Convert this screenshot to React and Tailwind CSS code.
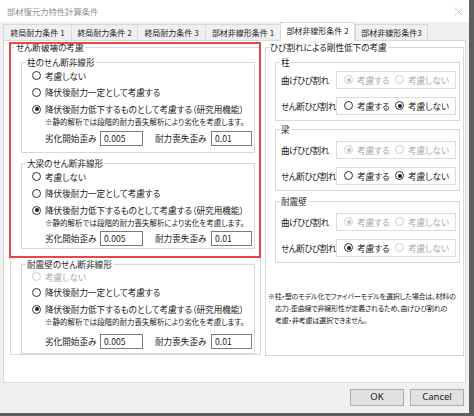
import React from "react";

const FONT = "[font-family:'Noto_Sans_CJK_JP','Noto_Sans_CJK_SC',sans-serif] [font-feature-settings:'palt']";

function Radio({ checked, disabled, label, gap = "ml-[4px]" }) {
  return (
    <div className="flex items-center">
      <span
        className={
          "w-[9px] h-[9px] rounded-full border bg-white flex items-center justify-center shrink-0 " +
          (disabled ? "border-[#cdcdcd]" : "border-[#333333]")
        }
      >
        {checked && (
          <span className={"w-[4px] h-[4px] rounded-full " + (disabled ? "bg-[#c2c2c2]" : "bg-[#1e1e1e]")} />
        )}
      </span>
      <span className={gap + " whitespace-nowrap " + (disabled ? "text-[#a9a9a9]" : "text-[#1b1b1b]")}>{label}</span>
    </div>
  );
}

function Field({ value, w }) {
  return (
    <div className={"h-[15px] border border-[#7a7a7a] bg-white pl-[3px] leading-[13px] text-[8.6px] text-[#1b1b1b] " + w}>
      {value}
    </div>
  );
}

function LeftGroup({ title, cls, r1, r2, r3, inp, pb, firstDisabled }) {
  return (
    <fieldset className={"border border-[#d8d8d8] ml-[10px] mr-[5px] " + cls}>
      <legend className="ml-[4px] px-[1px] leading-[11px] text-[8.6px] text-[#1b1b1b]">{title}</legend>
      <div className={"flex flex-col text-[8.6px] " + pb}>
        <div className={"flex items-center pl-[10px] " + r1}>
          <Radio label="考慮しない" disabled={firstDisabled} />
        </div>
        <div className={"flex items-center pl-[10px] " + r2}>
          <Radio label="降伏後耐力一定として考慮する" />
        </div>
        <div className={"flex items-center pl-[10px] " + r3}>
          <Radio label="降伏後耐力低下するものとして考慮する（研究用機能）" checked />
        </div>
        <div className="h-[8px] leading-[8px] pl-[23px] text-[7.5px] text-[#1b1b1b] whitespace-nowrap">
          ※静的解析では段階的耐力喪失解析により劣化を考慮します。
        </div>
        <div className={"flex items-center pl-[23px] " + inp}>
          <div className="w-[55px] leading-[15px] text-[#1b1b1b] whitespace-nowrap">劣化開始歪み</div>
          <Field value="0.005" w="w-[43px]" />
          <div className="ml-[12px] w-[56px] leading-[15px] text-[#1b1b1b] whitespace-nowrap">耐力喪失歪み</div>
          <Field value="0.01" w="w-[41px]" />
        </div>
      </div>
    </fieldset>
  );
}

function BoxRadios({ a, b }) {
  return (
    <div className="flex items-center h-[18px] w-[120px] border border-[#dcdcdc] bg-white pl-[7px]">
      <div className="w-[51px]">
        <Radio label="考慮する" checked={a.checked} disabled={a.disabled} gap="ml-[4px]" />
      </div>
      <Radio label="考慮しない" checked={b.checked} disabled={b.disabled} gap="ml-[4px]" />
    </div>
  );
}

function RightRow({ label, a, b }) {
  return (
    <div className="flex items-center h-[18px]">
      <div className="w-[60px] pl-[5px] text-[8.6px] tracking-[-0.5px] text-[#1b1b1b] whitespace-nowrap">{label}</div>
      <BoxRadios a={a} b={b} />
    </div>
  );
}

function RightGroup({ title, cls, pt, rows }) {
  return (
    <fieldset className={"border border-[#d8d8d8] ml-[9px] mr-[3px] " + cls}>
      <legend className="ml-[4px] px-[1px] leading-[11px] text-[8.6px] text-[#1b1b1b]">{title}</legend>
      <div className={"flex flex-col gap-[8px] pb-[5px] text-[8.6px] " + pt}>
        {rows.map((r, i) => (
          <RightRow key={i} label={r.label} a={r.a} b={r.b} />
        ))}
      </div>
    </fieldset>
  );
}

const tabs = [
  { t: "終局耐力条件 1", w: "w-[68px]" },
  { t: "終局耐力条件 2", w: "w-[66px]" },
  { t: "終局耐力条件 3", w: "w-[68px]" },
  { t: "部材非線形条件 1", w: "w-[75px]" },
  { t: "部材非線形条件 2", w: "w-[75px]", sel: true },
  { t: "部材非線形条件3", w: "w-[73px]" },
];

export default function App() {
  const dis = { checked: false, disabled: true };
  const disOn = { checked: true, disabled: true };
  const on = { checked: true, disabled: false };
  const off = { checked: false, disabled: false };
  return (
    <div className={"relative w-[474px] h-[416px] bg-[#5e5e5e] overflow-hidden " + FONT}>
      <div className="w-[469px] h-[413px] bg-[#f0f0f0] flex flex-col">
        {/* title bar */}
        <div className="h-[22px] bg-white flex items-center justify-between pl-[7px] pr-[6px] shrink-0">
          <span className="text-[8.3px] text-[#8f8f8f] whitespace-nowrap">部材復元力特性計算条件</span>
          <svg width="9" height="9" viewBox="0 0 9 9">
            <path d="M0.5 0.5 L8.5 8.5 M8.5 0.5 L0.5 8.5" stroke="#c4c4c4" strokeWidth="0.9" fill="none" />
          </svg>
        </div>
        {/* tabs */}
        <div className="h-[18px] flex items-end ml-[3px] shrink-0">
          {tabs.map((t) =>
            t.sel ? (
              <div
                key={t.t}
                className={
                  "relative z-10 h-[19px] -mb-[1px] bg-white border-x border-t border-[#d9d9d9] flex items-start justify-center pt-[2px] leading-[12px] text-[8px] text-[#1b1b1b] whitespace-nowrap " +
                  t.w
                }
              >
                {t.t}
              </div>
            ) : (
              <div
                key={t.t}
                className={
                  "h-[16px] bg-[#f0f0f0] border-l border-t border-[#d9d9d9] last:border-r flex items-center justify-center leading-[12px] text-[8px] text-[#1b1b1b] whitespace-nowrap " +
                  t.w
                }
              >
                {t.t}
              </div>
            )
          )}
        </div>
        {/* panel */}
        <div className="ml-[3px] w-[463px] h-[343px] bg-white border border-[#d9d9d9] flex items-stretch pl-[6px] pt-[1px] shrink-0">
          <fieldset className="w-[251px] self-start border border-[#d8d8d8]">
            <legend className="ml-[4px] px-[1px] leading-[11px] text-[8.6px] text-[#1b1b1b]">せん断破壊の考慮</legend>
            <div className="flex flex-col">
              <LeftGroup
                title="柱のせん断非線形"
                cls="mt-[4px]"
                r1="h-[16px]"
                r2="h-[17px]"
                r3="h-[17px]"
                inp="mt-[5px]"
                pb="pb-[6px]"
              />
              <LeftGroup
                title="大梁のせん断非線形"
                cls="mt-[5px]"
                r1="h-[16px]"
                r2="h-[17px]"
                r3="h-[17px]"
                inp="mt-[4px]"
                pb="pb-[2px]"
              />
              <LeftGroup
                title="耐震壁のせん断非線形"
                cls="mt-[10px]"
                r1="h-[14px]"
                r2="h-[17px]"
                r3="h-[17px]"
                inp="mt-[8px]"
                pb="pb-[4px]"
                firstDisabled
              />
            </div>
          </fieldset>
          <fieldset className="ml-[4px] w-[199px] h-[314px] border border-[#d8d8d8]">
            <legend className="ml-[3px] px-[1px] leading-[11px] text-[8.6px] text-[#1b1b1b]">ひび割れによる剛性低下の考慮</legend>
            <div className="flex flex-col">
              <RightGroup
                title="柱"
                cls="mt-[4px]"
                pt="pt-[3px]"
                rows={[
                  { label: "曲げひび割れ", a: disOn, b: dis },
                  { label: "せん断ひび割れ", a: off, b: on },
                ]}
              />
              <RightGroup
                title="梁"
                cls="mt-[3px]"
                pt="pt-[6px]"
                rows={[
                  { label: "曲げひび割れ", a: disOn, b: dis },
                  { label: "せん断ひび割れ", a: off, b: on },
                ]}
              />
              <RightGroup
                title="耐震壁"
                cls="mt-[5px]"
                pt="pt-[6px]"
                rows={[
                  { label: "曲げひび割れ", a: disOn, b: dis },
                  { label: "せん断ひび割れ", a: on, b: dis },
                ]}
              />
              <div className="mt-[27px] flex flex-col text-[7px] tracking-[-0.2px] leading-[12px] text-[#1b1b1b] whitespace-nowrap">
                <div className="pl-[2px]">※柱・壁のモデル化でファイバーモデルを選択した場合は、材料の</div>
                <div className="pl-[9px]">応力-歪曲線で非線形性が定義されるため、曲げひび割れの</div>
                <div className="pl-[9px]">考慮・非考慮は選択できません。</div>
              </div>
            </div>
          </fieldset>
        </div>
        {/* buttons */}
        <div className="flex justify-end gap-[6px] pr-[5px] mt-[6px]">
          <div className="w-[54px] h-[17px] border border-[#adadad] bg-[#e1e1e1] flex items-center justify-center text-[9.5px] text-[#1b1b1b] [font-family:'Noto_Sans',sans-serif]">
            OK
          </div>
          <div className="w-[54px] h-[17px] border border-[#adadad] bg-[#e1e1e1] flex items-center justify-center text-[9.5px] text-[#1b1b1b] [font-family:'Noto_Sans',sans-serif]">
            Cancel
          </div>
        </div>
      </div>
      {/* red annotation box */}
      <div className="absolute left-[9px] top-[42px] w-[252px] h-[216px] border-2 border-[#e5484a] pointer-events-none" />
    </div>
  );
}
